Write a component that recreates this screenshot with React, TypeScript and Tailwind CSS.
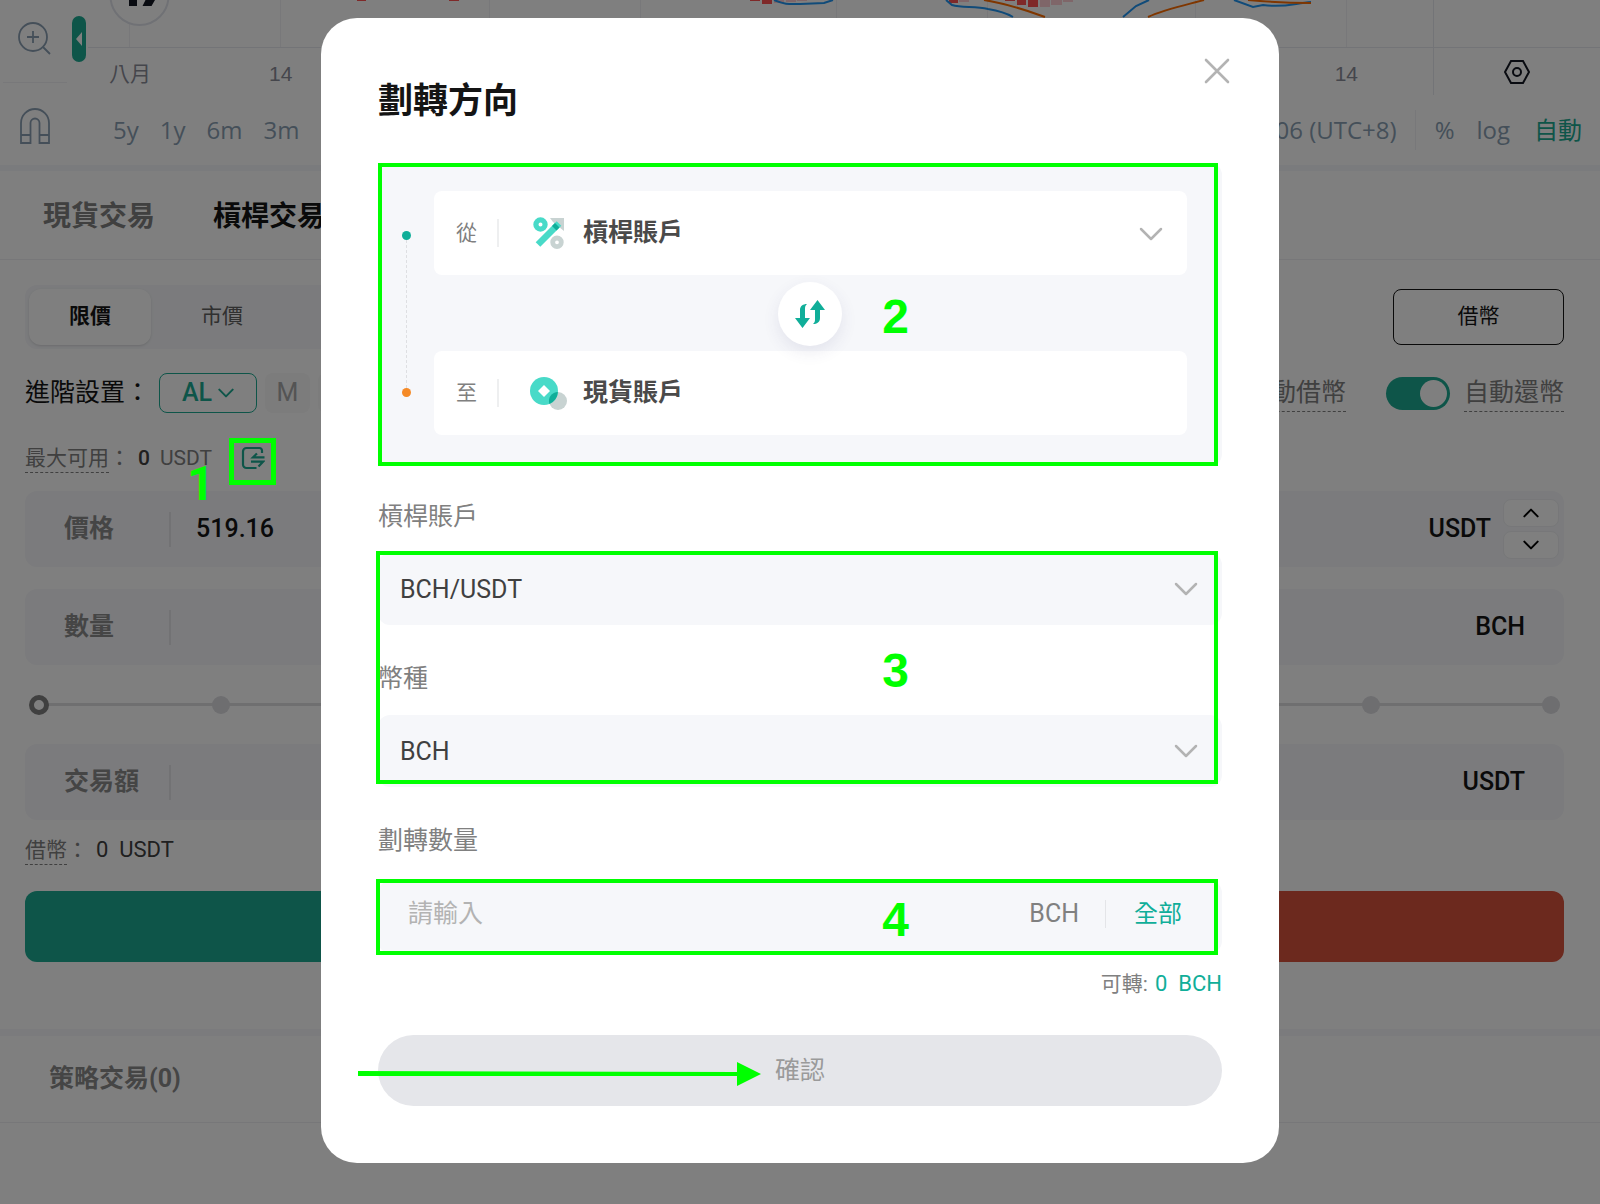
import { useState } from "react";

const RANGES = ["5y", "1y", "6m", "3m", "1m", "5d", "1d"];

function Chevron({ className }: { className: string }) {
  return (
    <svg viewBox="0 0 24 14" fill="none" stroke="currentColor" strokeLinecap="round" strokeLinejoin="round" className={className}>
      <path d="M2 2l10 10L22 2" />
    </svg>
  );
}

function ChartStrip() {
  return (
    <svg viewBox="88 0 1512 48" className="block w-full h-12" fill="none">
      <g stroke="#f0f1f5">
        <path d="M129.5 0V47M280.5 0V47M489.5 0V47M640.5 0V47M836.5 0V47M987.5 0V47M1195.5 0V47M1346.5 0V47" />
      </g>
      <path d="M88 47.5H1600M1433.5 0V48" stroke="#e6e8ee" />
      <g fill="#ff5252">
        <path d="M357 0h9v1h-9zM449 0h10v1h-10zM750 0h10v1h-10zM762 0h10v4h-10zM949 0h9v3h-9zM1005 0h10v1h-10zM1017 0h9v5h-9zM1028 0h10v7h-10z" />
      </g>
      <g fill="#ffcdd2">
        <path d="M774 0h10v3h-10zM786 0h10v2h-10zM797 0h10v1h-10zM959 0h10v2h-10zM1040 0h10v7h-10zM1051 0h11v5h-11zM1063 0h10v2h-10z" />
      </g>
      <g stroke="#2196f3" strokeWidth="2">
        <path d="M774 0C786 5 790 4 800 4L824 3L833 0M946 0L952 5C962 8 975 6 988 9C1000 11 1008 14 1013 17M1123 17L1136 6L1149 0M1234 0L1253 7L1263 5C1285 8 1295 3 1311 2" />
      </g>
      <g stroke="#ff6d00" strokeWidth="2">
        <path d="M984 0C1010 4 1028 11 1045 17M1148 17C1165 9 1190 4 1204 0M1248 0C1270 2 1290 3 1311 3" />
      </g>
      <circle cx="139.500" cy="-4" r="29" fill="#fff" stroke="#e0e3eb" strokeWidth="2" />
      <path d="M129 0h8v6h-8zM145.500 0h9.500l-3.500 6h-9z" fill="#131722" />
    </svg>
  );
}

function FieldRow({ label, value, unit, stepper }: { label: string; value?: string; unit: string; stepper?: boolean }) {
  return (
    <label className={`flex items-center h-[76px] rounded-xl bg-[#f6f7fa] pl-[39px] ${stepper ? "pr-[5px]" : "pr-[39px]"}`}>
      <span className="w-[105px] shrink-0 text-[25px] leading-8 font-bold text-[#8a8a8a]">{label}</span>
      <span className="w-0.5 h-[35px] bg-[#e4e5e8]" />
      <input className="ml-[25px] min-w-0 flex-1 bg-transparent text-[25px] leading-8 font-medium text-[#141414] outline-none" defaultValue={value} />
      <span className="text-[25px] leading-8 font-medium text-[#141414]">{unit}</span>
      {stepper && (
        <span className="ml-3 flex flex-col gap-1">
          <button aria-label="增加" className="flex h-7 w-14 items-center justify-center rounded-lg border border-[#eeeff2] bg-white">
            <Chevron className="w-4 h-2.5 rotate-180 stroke-[3]" />
          </button>
          <button aria-label="減少" className="flex h-7 w-14 items-center justify-center rounded-lg border border-[#eeeff2] bg-white">
            <Chevron className="w-4 h-2.5 stroke-[3]" />
          </button>
        </span>
      )}
    </label>
  );
}

function PercentSlider() {
  return (
    <div className="relative flex h-[79px] items-center justify-between px-1">
      <span className="absolute inset-x-3.5 h-[3px] bg-[#dfdfe1]" />
      <span className="relative z-[1] size-5 rounded-full border-[5px] border-[#808080] bg-white" />
      <span className="relative size-[18px] rounded-full bg-[#dcdce0]" />
      <span className="relative size-[18px] rounded-full bg-[#dcdce0]" />
      <span className="relative size-[18px] rounded-full bg-[#dcdce0]" />
      <span className="relative size-[18px] rounded-full bg-[#dcdce0]" />
      <input type="range" aria-label="比例" defaultValue={0} className="absolute inset-x-1 h-5 opacity-0" />
    </div>
  );
}

function Toggle({ label }: { label: string }) {
  return (
    <label className="flex items-center">
      <input type="checkbox" defaultChecked className="peer sr-only" />
      <span className="flex h-[33px] w-16 items-center justify-end rounded-full bg-[#1caa92] p-[3px]">
        <span className="size-[27px] rounded-full bg-white" />
      </span>
      <span className="ml-3.5 border-b border-dashed border-[#808080] text-[25px] leading-9 text-[#808080]">{label}</span>
    </label>
  );
}

function OrderForm({ side }: { side: "buy" | "sell" }) {
  return (
    <div>
      <div className="flex h-[30px] items-center text-[21px] leading-7 text-[#808080]">
        {side === "buy" && (
          <>
            <span className="border-b border-dashed border-[#808080]">最大可用</span>
            <span>：</span>
            <span className="ml-2 font-medium text-[#404040]">0</span>
            <span className="ml-2.5">USDT</span>
            <button aria-label="劃轉" className="relative ml-[29px] text-[#1caa92]">
              <svg viewBox="0 0 24 24" fill="none" stroke="currentColor" strokeWidth="2.200" className="block size-6">
                <path d="M21 7V4.500A2.500 2.500 0 0 0 18.500 2h-13A3.500 3.500 0 0 0 2 5.500v13A3.500 3.500 0 0 0 5.500 22H15.500M16 7.500L12 11.300H23.500M10 15.700H22L17.500 20.500" />
              </svg>
              <span className="absolute -left-3 -top-2 z-20 size-[47px] border-[5px] border-[#00ff00]" />
              <span className="absolute -left-[54px] top-3.5 z-20 text-5xl leading-[48px] font-bold text-[#00ff00]">1</span>
            </button>
          </>
        )}
      </div>
      <div className="mt-[18px] flex flex-col">
        <FieldRow label="價格" value="519.16" unit="USDT" stepper />
        <div className="h-[22px]" />
        <FieldRow label="數量" unit="BCH" />
        <PercentSlider />
        <FieldRow label="交易額" unit="USDT" />
      </div>
      <div className="mt-[15px] flex h-[30px] items-center text-[21px] leading-7 text-[#808080]">
        {side === "buy" && (
          <>
            <span className="border-b border-dashed border-[#808080]">借幣</span>
            <span>：</span>
            <span className="ml-2 text-[22px] text-[#404040]">0&nbsp; USDT</span>
          </>
        )}
      </div>
      <button
        className={`mt-[26px] block h-[71px] w-full rounded-xl text-2xl text-white ${side === "buy" ? "bg-[#1caa92]" : "bg-[#d8523c]"}`}
      >
        {side === "buy" ? "買入" : "賣出"}
      </button>
    </div>
  );
}

function TradePage() {
  return (
    <div>
      <section className="flex h-[165px]">
        <div className="flex w-[70px] shrink-0 flex-col items-center text-[#8a9fb3]">
          <svg viewBox="0 0 34 34" fill="none" stroke="currentColor" strokeWidth="1.800" className="mt-[21px] size-[34px]">
            <circle cx="15" cy="16" r="14" />
            <path d="M9 16h12M15 10v12M25 26l7 7" />
          </svg>
          <div className="mt-[27px] h-px w-16 bg-[#f0f1f4]" />
          <svg viewBox="0 0 30 36" fill="none" stroke="currentColor" strokeWidth="1.800" className="mt-[25px] h-9 w-[30px]">
            <path d="M1 35V15a14 14 0 0 1 28 0v20H19.500V15a4.500 4.500 0 0 0-9 0v20zM1 27h9.500M19.500 27H29" />
          </svg>
        </div>
        <button aria-label="收合" className="ml-0.5 mt-4 flex h-[46px] w-3.5 shrink-0 items-center justify-center rounded-full bg-[#1caa92]">
          <svg viewBox="0 0 6 14" className="h-3.5 w-1.5" fill="#fff">
            <path d="M6 0v14L0 7z" />
          </svg>
        </button>
        <div className="ml-0.5 min-w-0 flex-1">
          <ChartStrip />
          <div className="flex h-[47px] font-['Liberation_Sans','Noto_Sans_CJK_TC',sans-serif] text-[21px] leading-[52px] text-[#8a8c98]">
            <span className="ml-[21px]">八月</span>
            <span className="ml-[118px]">14</span>
            <span className="ml-auto mr-[75px]">14</span>
            <div className="flex w-[167px] justify-center border-l border-[#e6e8ee] pt-3">
              <svg viewBox="0 0 26 24" fill="none" stroke="#131722" strokeWidth="2" className="h-6 w-[26px]">
                <path d="M7 1h12l6 11-6 11H7L1 12z" />
                <circle cx="13" cy="12" r="4" />
              </svg>
            </div>
          </div>
          <div className="flex h-[70px] items-center pl-[25px] pr-[18px] font-['Open_Sans','Noto_Sans_CJK_TC',sans-serif] text-2xl leading-8 text-[#8a9fb3]">
            <div className="flex gap-[21px]">
              {RANGES.map((r) => (
                <button key={r}>{r}</button>
              ))}
            </div>
            <span className="ml-auto">12:30:06 (UTC+8)</span>
            <span className="ml-[18px] mr-[19px] h-10 w-px bg-[#f0f1f4]" />
            <button className="mr-[22px]">%</button>
            <button className="mr-6">log</button>
            <button className="text-[#1caa92]">自動</button>
          </div>
        </div>
      </section>

      <section className="border-t-[6px] border-[#f5f7fb]">
        <nav className="flex h-[89px] items-center gap-[58px] border-b border-[#eeeff2] pl-[43px] pt-[3px] text-[28px] leading-10 font-bold">
          <button className="text-[#808080]">現貨交易</button>
          <button className="text-[#141414]">槓桿交易</button>
        </nav>
        <div className="px-[25px] pt-[25px] pr-9">
          <div className="flex items-center justify-between">
            <div className="flex h-16 w-[500px] items-center rounded-xl bg-[#f6f7fa] p-1 text-[21px] leading-7">
              <button className="h-14 rounded-xl bg-white px-10 pb-0.5 font-bold text-[#141414] shadow">限價</button>
              <button className="h-14 px-[50px] pb-0.5 text-[#606060]">市價</button>
            </div>
            <button className="h-14 w-[171px] rounded-lg border border-[#141414] pb-0.5 text-[21px] leading-7 text-[#141414]">借幣</button>
          </div>
          <div className="mt-6 flex h-10 items-center">
            <span className="text-[25px] leading-8 text-[#141414]">進階設置：</span>
            <button className="ml-[9px] flex h-10 w-[98px] items-center justify-center gap-1.5 rounded-lg border border-[#1caa92] text-[25px] font-medium text-[#1caa92]">
              AL
              <Chevron className="w-4 h-2.5 stroke-[3]" />
            </button>
            <button className="ml-2 h-10 w-[45px] rounded-lg bg-[#f8f8f8] text-[25px] text-[#a8a8a8]">M</button>
            <button className="ml-2 h-10 w-[45px] rounded-lg bg-[#f8f8f8] text-[25px] text-[#a8a8a8]">B</button>
            <div className="ml-auto flex gap-10">
              <Toggle label="自動借幣" />
              <Toggle label="自動還幣" />
            </div>
          </div>
          <div className="mt-[30px] grid grid-cols-2 gap-[39px]">
            <OrderForm side="buy" />
            <OrderForm side="sell" />
          </div>
        </div>
      </section>

      <section className="mt-[67px] border-t-[7px] border-[#f6f7fa]">
        <h2 className="border-b border-[#eeeff2] pl-[49px] text-[25px] leading-[86px] font-bold text-[#8a8a8a]">策略交易(0)</h2>
      </section>
    </div>
  );
}

function MarginIcon() {
  return (
    <svg viewBox="0 0 32 32" fill="none" className="size-8">
      <path d="M17 1h14v13l-5-4-6-5z" fill="#c8d3d2" />
      <path d="M5 27.500L26 6.500" stroke="#48dac8" strokeWidth="6.500" />
      <path d="M22 6l4.500 4.500-3 3-4.500-4.500z" fill="#10ae99" />
      <circle cx="7.500" cy="7.500" r="4.600" stroke="#48dac8" strokeWidth="5.200" />
      <circle cx="24" cy="25.300" r="4.300" stroke="#c8d3d2" strokeWidth="4.800" />
    </svg>
  );
}

function SpotIcon() {
  return (
    <svg viewBox="0 0 37 33" className="h-[33px] w-[37px]">
      <circle cx="28" cy="24" r="9" fill="#c8d3d2" />
      <circle cx="14" cy="14" r="14" fill="#48dac8" />
      <path d="M19.400 26.900A9 9 0 0 1 27.900 15A14 14 0 0 1 19.400 26.900z" fill="#10ae99" />
      <path d="M14 8l6 6-6 6-6-6z" fill="#fff" />
    </svg>
  );
}

function PickerField({ id, label, options, className }: { id: string; label: string; options: string[]; className?: string }) {
  return (
    <div className={className}>
      <label htmlFor={id} className="block text-[25px] leading-7 text-[#808080]">{label}</label>
      <div className="relative mt-[22px]">
        <select id={id} className="block h-[72px] w-full appearance-none rounded-xl bg-[#f6f7fa] pl-[22px] pt-0.5 text-[25px] text-[#404040] outline-none">
          {options.map((o) => (
            <option key={o}>{o}</option>
          ))}
        </select>
        <Chevron className="pointer-events-none absolute right-6 top-[29px] w-6 h-3.5 stroke-[2.5] text-[#b3b3b3]" />
      </div>
    </div>
  );
}

// Numbered call-outs drawn over the steps of the form
function Step({ n }: { n: number }) {
  return (
    <span className="pointer-events-none absolute right-[313px] font-['Liberation_Sans',sans-serif] text-5xl leading-[48px] font-bold text-[#00ff00]">
      {n}
    </span>
  );
}

function TransferDialog({ onClose }: { onClose: () => void }) {
  const [amount, setAmount] = useState("");

  return (
    <div role="dialog" aria-labelledby="transfer-title" className="relative w-full max-w-[958px] rounded-[36px] bg-white px-[57px] pt-16 pb-[57px]">
      <button aria-label="關閉" onClick={onClose} className="absolute right-[49px] top-10">
        <svg viewBox="0 0 26 26" fill="none" stroke="#b3b3b3" strokeWidth="2.600" strokeLinecap="round" className="size-[26px]">
          <path d="M2 2l22 22M24 2L2 24" />
        </svg>
      </button>
      <h1 id="transfer-title" className="text-[35px] leading-10 font-bold text-[#141414]">劃轉方向</h1>

      <div className="relative mt-[41px] flex rounded-xl bg-[#f6f7fa] pt-7 pr-[35px] pb-[31px]">
        <div className="flex w-14 flex-col items-center pt-10 pb-[38px]">
          <span className="size-[9px] rounded-full bg-[#10ae99]" />
          <span className="flex-1 border-l border-dashed border-[#dedfe2]" />
          <span className="size-[9px] rounded-full bg-[#f58a27]" />
        </div>
        <div className="flex min-w-0 flex-1 flex-col gap-[76px]">
          <div className="relative flex h-[84px] items-center rounded-lg bg-white pl-[22px]">
            <label htmlFor="from" className="text-[21px] leading-7 text-[#808080]">從</label>
            <span className="ml-5 mr-[34px] h-7 w-0.5 bg-[#eeeff0]" />
            <MarginIcon />
            <select id="from" className="ml-[18px] h-full flex-1 appearance-none bg-transparent text-[25px] font-bold text-[#4a4a4a] outline-none">
              <option>槓桿賬戶</option>
              <option>現貨賬戶</option>
            </select>
            <Chevron className="pointer-events-none absolute right-6 top-9 w-6 h-3.5 stroke-[2.5] text-[#b3b3b3]" />
          </div>
          <div className="flex h-[84px] items-center rounded-lg bg-white pl-[22px]">
            <span className="text-[21px] leading-7 text-[#808080]">至</span>
            <span className="ml-5 mr-[31px] h-7 w-0.5 bg-[#eeeff0]" />
            <SpotIcon />
            <span className="ml-4 text-[25px] leading-8 font-bold text-[#4a4a4a]">現貨賬戶</span>
          </div>
        </div>
        <button aria-label="交換" className="absolute left-[400px] top-[119px] flex size-16 items-center justify-center rounded-full bg-white shadow-[0_6px_16px_rgba(60,60,120,0.10)]">
          <svg viewBox="0 0 30 30" className="size-[30px]" fill="#10ae99">
            <path d="M12 5C10 7 10 8 10 10v9h5L7.500 29 0 19h5v-8C5 7 8 5 12 5zM18 25c2-2 2-3 2-5v-9h-5L22.500 1 30 11h-5v8c0 4-3 6-7 6z" />
          </svg>
        </button>
        <span className="pointer-events-none absolute inset-y-0 left-0 right-1 border-4 border-[#00ff00]" />
        <div className="absolute right-0 top-[130px]"><Step n={2} /></div>
      </div>

      <div className="relative mt-[37px]">
        <PickerField id="pair" label="槓桿賬戶" options={["BCH/USDT"]} />
        <PickerField id="coin" label="幣種" options={["BCH"]} className="mt-10" />
        <span className="pointer-events-none absolute -left-0.5 right-1 top-12 bottom-[3px] border-4 border-[#00ff00]" />
        <div className="absolute right-0 top-[144px]"><Step n={3} /></div>
      </div>

      <label htmlFor="amount" className="mt-10 block text-[25px] leading-7 text-[#808080]">劃轉數量</label>
      <div className="relative mt-[26px] flex h-[72px] items-center rounded-xl bg-[#f6f7fa] pl-[30px] pr-10 pb-1.5">
        <input
          id="amount"
          value={amount}
          onChange={(e) => setAmount(e.target.value)}
          placeholder="請輸入"
          className="min-w-0 flex-1 bg-transparent text-[25px] leading-8 text-[#404040] outline-none placeholder:text-[#b3b3b3]"
        />
        <span className="text-[25px] leading-8 text-[#808080]">BCH</span>
        <span className="ml-[26px] mr-7 h-7 w-px bg-[#e4e5e8]" />
        <button onClick={() => setAmount("0")} className="text-2xl leading-8 text-[#10ae99]">全部</button>
        <span className="pointer-events-none absolute -inset-y-0.5 -left-0.5 right-1 border-4 border-[#00ff00]" />
        <div className="absolute right-0 top-[15px]"><Step n={4} /></div>
      </div>
      <p className="mt-[17px] text-right text-[21px] leading-7 text-[#808080]">
        可轉: <span className="ml-0.5 text-[22px] text-[#10ae99]">0&nbsp; BCH</span>
      </p>

      <div className="relative mt-[37px]">
        <button className="block h-[71px] w-full rounded-full bg-[#e5e6ea] text-[25px] leading-8 text-[#9a9a9a]">確認</button>
        <svg viewBox="0 0 403 24" className="pointer-events-none absolute -left-5 top-[27px] h-6 w-[403px]" fill="#00ff00">
          <path d="M0 9l379 1V0l24 12-24 12V14L0 14z" />
        </svg>
      </div>
    </div>
  );
}

export default function App() {
  const [open, setOpen] = useState(true);

  return (
    <div className="relative min-h-screen overflow-hidden bg-white font-['Roboto','Noto_Sans_CJK_TC',sans-serif]">
      <TradePage />
      {open && (
        <div className="absolute inset-0 z-10 flex items-start justify-center bg-black/50 pt-[18px]">
          <TransferDialog onClose={() => setOpen(false)} />
        </div>
      )}
    </div>
  );
}
